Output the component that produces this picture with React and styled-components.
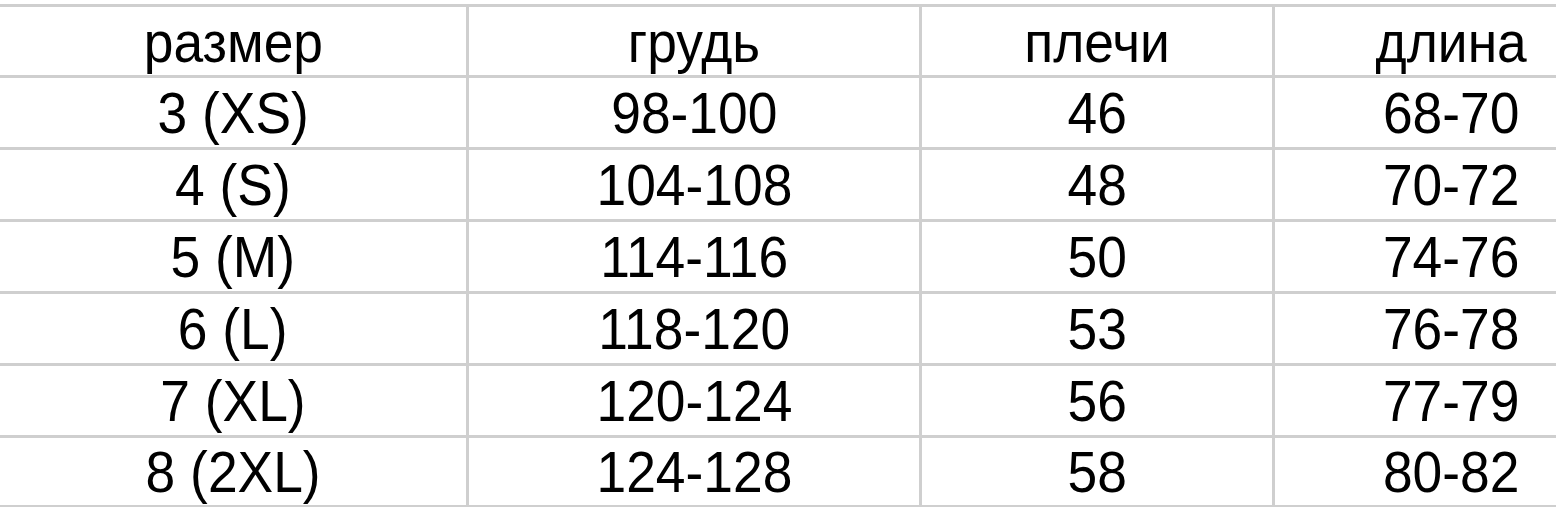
import styled, { createGlobalStyle } from "styled-components";

const GlobalStyle = createGlobalStyle`
  html, body {
    margin: 0;
    padding: 0;
    background: #fff;
    overflow: hidden;
  }
`;

const rows = [
  ["размер", "грудь", "плечи", "длина"],
  ["3 (XS)", "98-100", "46", "68-70"],
  ["4 (S)", "104-108", "48", "70-72"],
  ["5 (M)", "114-116", "50", "74-76"],
  ["6 (L)", "118-120", "53", "76-78"],
  ["7 (XL)", "120-124", "56", "77-79"],
  ["8 (2XL)", "124-128", "58", "80-82"],
];

const Page = styled.div`
  width: 1556px;
  height: 507px;
  padding-top: 4px;
  box-sizing: border-box;
  overflow: hidden;
`;

const Grid = styled.div`
  display: grid;
  width: 1628px;
  grid-template-columns: 466px 450px 350px 1fr;
  grid-template-rows: 68px repeat(5, 69px) 67px;
  gap: 3px;
  border-top: 3px solid #cfcfcf;
  border-bottom: 3px solid #cfcfcf;
  background: #cfcfcf;
`;

const Cell = styled.div`
  background: #fff;
  display: flex;
  align-items: center;
  justify-content: center;
  font-family: "Liberation Sans", Arial, sans-serif;
  font-size: 58px;
  color: #000;
  white-space: nowrap;
`;

const Text = styled.span`
  display: inline-block;
  transform: scaleX(0.92);
`;

export default function App() {
  return (
    <Page>
      <GlobalStyle />
      <Grid>
        {rows.map((row, r) =>
          row.map((text, c) => (
            <Cell key={`${r}-${c}`}>
              <Text>{text}</Text>
            </Cell>
          ))
        )}
      </Grid>
    </Page>
  );
}
